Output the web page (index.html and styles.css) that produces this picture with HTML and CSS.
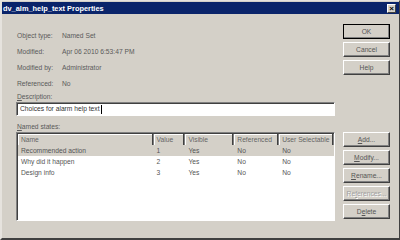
FILE: index.html
```html
<!DOCTYPE html>
<html lang="en">
<head>
    <meta charset="UTF-8">
    <title>dv_alm_help_text Properties</title>
    <link rel="stylesheet" href="styles.css">
</head>
<body>
<div class="window">
    <div class="titlebar">
        <span class="title">dv_alm_help_text Properties</span>
        <span class="close">&#215;</span>
    </div>
    <div class="content">
        <div class="main">
            <div class="info">
                <div class="row"><span class="label">Object type:</span><span>Named Set</span></div>
                <div class="row"><span class="label">Modified:</span><span>Apr 06 2010 6:53:47 PM</span></div>
                <div class="row"><span class="label">Modified by:</span><span>Administrator</span></div>
                <div class="row"><span class="label">Referenced:</span><span>No</span></div>
            </div>
            <div class="caption"><u>D</u>escription:</div>
            <div class="textbox">Choices for alarm help text<span class="caret"></span></div>
            <div class="caption"><u>N</u>amed states:</div>
            <div class="listview">
                <div class="lrow head">
                    <span class="c1">Name</span><span class="c2">Value</span><span class="c3">Visible</span><span class="c4">Referenced</span><span class="c5">User Selectable</span>
                </div>
                <div class="lrow selected">
                    <span class="c1">Recommended action</span><span class="c2">1</span><span class="c3">Yes</span><span class="c4">No</span><span class="c5">No</span>
                </div>
                <div class="lrow">
                    <span class="c1">Why did it happen</span><span class="c2">2</span><span class="c3">Yes</span><span class="c4">No</span><span class="c5">No</span>
                </div>
                <div class="lrow">
                    <span class="c1">Design info</span><span class="c2">3</span><span class="c3">Yes</span><span class="c4">No</span><span class="c5">No</span>
                </div>
            </div>
        </div>
        <div class="side">
            <div class="group top">
                <button class="btn default">OK</button>
                <button class="btn">Cancel</button>
                <button class="btn">Help</button>
            </div>
            <div class="group bottom">
                <button class="btn"><u>A</u>dd...</button>
                <button class="btn"><u>M</u>odify...</button>
                <button class="btn"><u>R</u>ename...</button>
                <button class="btn disabled">Re<u>f</u>erences...</button>
                <button class="btn">D<u>e</u>lete</button>
            </div>
        </div>
    </div>
</div>
</body>
</html>
```

FILE: styles.css
```css
* {
    margin: 0;
    padding: 0;
    box-sizing: border-box;
}

body {
    width: 400px;
    height: 240px;
    overflow: hidden;
    font-family: "Liberation Sans", Arial, sans-serif;
    font-size: 6.7px;
    color: #5a5a5a;
    background: #d4d0c8;
}

.window {
    width: 400px;
    height: 240px;
    background: #d4d0c8;
    border-left: 2px solid #e6e3de;
    border-top: 1px solid #e6e3de;
    border-right: 1px solid #404040;
    border-bottom: 2px solid #404040;
    display: flex;
    flex-direction: column;
}

.titlebar {
    height: 12px;
    margin-top: 1px;
    background: #0a246a;
    color: #fff;
    font-weight: bold;
    font-size: 7.4px;
    display: flex;
    align-items: center;
    justify-content: space-between;
    padding: 0 3px 0 1px;
}

.close {
    width: 9px;
    height: 9px;
    background: #d4d0c8;
    color: #000;
    font-size: 8px;
    line-height: 8px;
    text-align: center;
    border: 1px solid;
    border-color: #fff #404040 #404040 #fff;
}

.content {
    flex: 1;
    display: flex;
    padding: 10px 7px 0 14px;
}

.main {
    width: 319px;
    display: flex;
    flex-direction: column;
}

.info {
    padding-left: 1px;
    margin-top: 4px;
}

.row {
    height: 15.8px;
    display: flex;
    align-items: center;
}

.label {
    width: 45px;
}

.caption {
    height: 11px;
    line-height: 11px;
    padding-left: 1px;
}

.caption:first-of-type {
    margin-top: 0;
}

.textbox {
    height: 14px;
    margin-bottom: 5px;
    background: #fff;
    color: #333;
    border: 1px solid;
    border-color: #808080 #fff #fff #808080;
    box-shadow: inset 1px 1px 0 #404040;
    padding-left: 3px;
    line-height: 12px;
    display: flex;
    align-items: center;
}

.caret {
    display: inline-block;
    width: 1px;
    height: 9px;
    background: #000;
    margin-left: 1px;
}

.listview {
    height: 89px;
    background: #fff;
    border: 1px solid;
    border-color: #808080 #fff #fff #808080;
    box-shadow: inset 1px 1px 0 #404040;
    padding: 1px 0 0 1px;
}

.lrow {
    height: 11px;
    display: flex;
    align-items: center;
    color: #555;
}

.lrow span {
    padding-left: 3px;
    white-space: nowrap;
}

.head {
    background: #d4d0c8;
    color: #666;
}

.head span {
    height: 11px;
    line-height: 11px;
    border-right: 1px solid #808080;
    box-shadow: inset -1px 0 0 #404040, inset 1px 1px 0 #fff;
}

.selected {
    background: #d4d0c8;
}

.c1 { width: 136px; }
.c2 { width: 32px; }
.c3 { width: 49px; }
.c4 { width: 45px; }
.c5 { width: 55px; }

.side {
    padding-left: 8px;
    display: flex;
    flex-direction: column;
}

.group {
    display: flex;
    flex-direction: column;
    gap: 3px;
}

.bottom {
    margin-top: 57px;
}

.btn {
    width: 47px;
    height: 15px;
    font-family: "Liberation Sans", Arial, sans-serif;
    font-size: 6.7px;
    color: #555;
    background: #d4d0c8;
    border: 1px solid;
    border-color: #fff #404040 #404040 #fff;
    box-shadow: inset -1px -1px 0 #808080;
}

.default {
    outline: 1px solid #000;
    outline-offset: -1px;
    border-color: #fff #404040 #404040 #fff;
}

.disabled {
    color: #a0a0a0;
    text-shadow: 1px 1px 0 #fff;
}
```
